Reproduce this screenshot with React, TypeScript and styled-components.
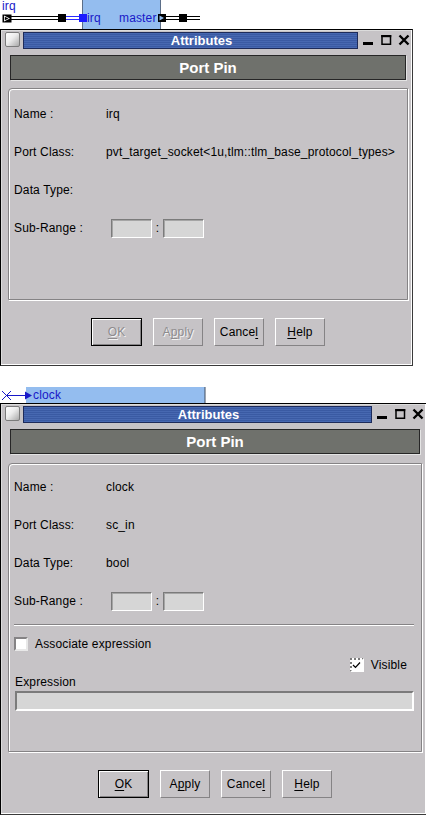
import React from 'react';
import styled, { createGlobalStyle, css } from 'styled-components';

const Global = createGlobalStyle`
  html, body { margin: 0; padding: 0; background: #ffffff; overflow: hidden; }
  body { font-family: "Liberation Sans", Arial, sans-serif; font-size: 12px; color: #000; letter-spacing: 0.15px; }
`;

const Page = styled.div`
  width: 426px;
  height: 815px;
  display: flex;
  flex-direction: column;
  overflow: hidden;
`;

const Strip = styled.svg<{ $h: number }>`
  display: block;
  flex: none;
  width: 426px;
  height: ${p => p.$h}px;
  font-family: "Liberation Sans", Arial, sans-serif;
  font-size: 12px;
`;

const Window = styled.div<{ $w: number; $h: number }>`
  flex: none;
  box-sizing: border-box;
  width: ${p => p.$w}px;
  height: ${p => p.$h}px;
  background: #c6c3c6;
  border: 1px solid #000;
  border-right-color: #3a3a3a;
  border-bottom-color: #3a3a3a;
  box-shadow: inset -1px -1px 0 #ffffff, inset 1px 1px 0 #dcdcdc;
  display: flex;
  flex-direction: column;
`;

const TitleRow = styled.div`
  flex: none;
  display: flex;
  height: 17px;
  margin: 2px 0 0 4px;
`;

const WinIcon = styled.div`
  flex: none;
  width: 15px;
  height: 15px;
  box-sizing: border-box;
  margin-right: 3px;
  border: 1px solid #7b7b7b;
  border-radius: 2px;
  background: linear-gradient(135deg, #ffffff 0%, #ececec 45%, #a9a9a9 100%);
`;

const TitleBar = styled.div`
  flex: 1;
  box-sizing: border-box;
  border: 1px solid #1d2b5a;
  background: repeating-linear-gradient(to bottom, #4768b1 0px, #4768b1 1px, #3a5aa3 1px, #3a5aa3 2px);
  color: #ffffff;
  font-weight: bold;
  font-size: 13px;
  letter-spacing: 0;
  line-height: 15px;
  text-align: center;
  padding-left: 22px;
  white-space: nowrap;
  overflow: hidden;
`;

const Controls = styled.svg`
  flex: none;
  display: block;
  width: 54px;
  height: 17px;
`;

const Header = styled.div`
  flex: none;
  box-sizing: border-box;
  height: 25px;
  margin: 6px 6px 0 9px;
  background: #6f716c;
  border: 1px solid #262626;
  box-shadow: 1px 1px 0 #e4e4e4;
  color: #ffffff;
  font-weight: bold;
  font-size: 15px;
  letter-spacing: 0;
  line-height: 23px;
  text-align: center;
`;

const Group = styled.div<{ $h: number; $pt: number; $gap: number }>`
  flex: none;
  box-sizing: border-box;
  height: ${p => p.$h}px;
  margin: ${p => p.$gap}px 4px 0 7px;
  padding: ${p => p.$pt}px 7px 0 5px;
  border: 1px solid #858385;
  border-top-left-radius: 4px;
  box-shadow: inset 1px 1px 0 #ffffff, 1px 1px 0 #ffffff;
  display: flex;
  flex-direction: column;
`;

const FieldGrid = styled.div`
  display: grid;
  grid-template-columns: 92px 1fr;
  grid-auto-rows: 20px;
  row-gap: 18px;
  align-items: center;
`;

const Text = styled.span`
  white-space: nowrap;
`;

const RangeBox = styled.div`
  display: flex;
  align-items: center;
  margin-left: 5px;
`;

const SmallInput = styled.div`
  width: 41px;
  height: 19px;
  box-sizing: border-box;
  background: #d6d6d6;
  border: 1px solid;
  border-color: #7b7b7b #ffffff #ffffff #7b7b7b;
  box-shadow: inset 1px 1px 0 #a5a5a5;
`;

const Colon = styled.span`
  width: 11px;
  text-align: center;
`;

const Separator = styled.div`
  height: 0;
  margin-top: 13px;
  border-top: 1px solid #858385;
  border-bottom: 1px solid #ffffff;
`;

const CheckRow = styled.div<{ $right?: boolean; $mt: number }>`
  display: flex;
  align-items: center;
  gap: 7px;
  height: 14px;
  margin-top: ${p => p.$mt}px;
  justify-content: ${p => (p.$right ? 'flex-end' : 'flex-start')};
  padding-right: ${p => (p.$right ? '7px' : '0')};
`;

const Check = styled.span<{ $checked?: boolean }>`
  flex: none;
  width: 14px;
  height: 14px;
  box-sizing: border-box;
  background: #ffffff;
  border: 2px solid;
  border-color: #858385 #e8e8e8 #e8e8e8 #858385;
  display: flex;
  align-items: center;
  justify-content: center;
  ${p =>
    p.$checked &&
    css`
      border-width: 2px;
      border-style: dotted;
      border-color: #7a7a7a #ffffff #ffffff #7a7a7a;
    `}
`;

const FieldLabel = styled.div`
  height: 14px;
  line-height: 14px;
  margin-top: 3px;
  padding-left: 1px;
`;

const WideInput = styled.div`
  height: 20px;
  margin: 2px 0 0 1px;
  box-sizing: border-box;
  background: #d6d6d6;
  border: 2px solid;
  border-color: #7b7b7b #ffffff #ffffff #7b7b7b;
`;

const ButtonRow = styled.div`
  flex: none;
  display: flex;
  justify-content: center;
  gap: 11px;
  margin-top: 18px;
  padding-left: 3px;
`;

const Btn = styled.div<{ $default?: boolean; $disabled?: boolean }>`
  width: ${p => (p.$default ? 51 : 50)}px;
  height: 28px;
  box-sizing: border-box;
  display: flex;
  align-items: center;
  justify-content: center;
  border: 1px solid;
  border-color: #ffffff #858385 #858385 #ffffff;
  color: ${p => (p.$disabled ? '#8e8c8e' : '#000')};
  text-shadow: ${p => (p.$disabled ? '1px 1px 0 #f4f4f4' : 'none')};
  ${p =>
    p.$default &&
    css`
      border-color: #000;
      box-shadow: inset 1px 1px 0 #ffffff, inset -1px -1px 0 #858385;
    `}
  u {
    text-decoration: underline;
    text-underline-offset: 2px;
  }
`;

const Gap = styled.div<{ $h: number }>`
  flex: none;
  height: ${p => p.$h}px;
`;

const BLUE = '#1818c8';

function ControlIcons() {
  return (
    <Controls viewBox="0 0 54 17">
      <rect x="5" y="10" width="10" height="3" fill="#000" />
      <rect x="24" y="3.75" width="8.5" height="8.5" fill="none" stroke="#000" strokeWidth="1.5" />
      <rect x="23.25" y="3" width="10" height="2.2" fill="#000" />
      <path d="M41.5 3.5 L50.5 12.5 M50.5 3.5 L41.5 12.5" stroke="#000" strokeWidth="2.4" />
    </Controls>
  );
}

function Dialog(props: {
  width: number;
  height: number;
  groupH: number;
  padTop: number;
  gap: number;
  name: string;
  portClass: string;
  dataType: string;
  disabled?: boolean;
  extra?: React.ReactNode;
}) {
  return (
    <Window $w={props.width} $h={props.height}>
      <TitleRow>
        <WinIcon />
        <TitleBar>Attributes</TitleBar>
        <ControlIcons />
      </TitleRow>
      <Header>Port Pin</Header>
      <Group $h={props.groupH} $pt={props.padTop} $gap={props.gap}>
        <FieldGrid>
          <Text>Name :</Text>
          <Text>{props.name}</Text>
          <Text>Port Class:</Text>
          <Text>{props.portClass}</Text>
          <Text>Data Type:</Text>
          <Text>{props.dataType}</Text>
          <Text>Sub-Range :</Text>
          <RangeBox>
            <SmallInput />
            <Colon>:</Colon>
            <SmallInput />
          </RangeBox>
        </FieldGrid>
        {props.extra}
      </Group>
      <ButtonRow>
        <Btn $default $disabled={props.disabled}>
          <span><u>O</u>K</span>
        </Btn>
        <Btn $disabled={props.disabled}>
          <span>A<u>p</u>ply</span>
        </Btn>
        <Btn>
          <span>Cance<u>l</u></span>
        </Btn>
        <Btn>
          <span><u>H</u>elp</span>
        </Btn>
      </ButtonRow>
    </Window>
  );
}

function ExpressionPart() {
  return (
    <>
      <Separator />
      <CheckRow $mt={11}>
        <Check />
        <Text>Associate expression</Text>
      </CheckRow>
      <CheckRow $right $mt={7}>
        <Check $checked>
          <svg width="9" height="8" viewBox="0 0 9 8">
            <path d="M1 4 L3.5 6.5 L8 1.5" fill="none" stroke="#000" strokeWidth="1.2" />
          </svg>
        </Check>
        <Text>Visible</Text>
      </CheckRow>
      <FieldLabel>Expression</FieldLabel>
      <WideInput />
    </>
  );
}

export default function App() {
  return (
    <Page>
      <Global />
      <Strip $h={29} viewBox="0 0 426 29">
        <text x="2" y="10" fill={BLUE}>irq</text>
        <rect x="2.5" y="14.5" width="9" height="8" fill="#000" />
        <polygon points="4,15.5 10,18.5 4,21.5" fill="#fff" />
        <polygon points="4.8,16.8 8.5,18.5 4.8,20.2" fill="#000" />
        <line x1="11" y1="16.5" x2="59" y2="16.5" stroke="#000" />
        <line x1="11" y1="19.5" x2="59" y2="19.5" stroke="#000" />
        <rect x="58" y="14" width="8" height="8" fill="#000" />
        <line x1="66" y1="16.5" x2="81" y2="16.5" stroke="#2a2aff" />
        <line x1="66" y1="19.5" x2="81" y2="19.5" stroke="#2a2aff" />
        <rect x="82.5" y="-1" width="78" height="31" fill="#94bdef" stroke="#5b6e88" />
        <rect x="79" y="14" width="8" height="8" fill="#1a1aff" />
        <text x="87" y="22" fill={BLUE}>irq</text>
        <text x="119" y="22" fill={BLUE}>master</text>
        <rect x="158" y="14" width="8" height="8" fill="#000" />
        <polygon points="159.5,15.5 164,18 159.5,20.5" fill="#94bdef" />
        <line x1="166" y1="16.5" x2="180" y2="16.5" stroke="#000" />
        <line x1="166" y1="19.5" x2="180" y2="19.5" stroke="#000" />
        <rect x="179" y="14" width="8" height="8" fill="#000" />
        <line x1="187" y1="16.5" x2="200" y2="16.5" stroke="#000" />
        <line x1="187" y1="19.5" x2="200" y2="19.5" stroke="#000" />
      </Strip>
      <Dialog
        width={413}
        height={337}
        groupH={212}
        padTop={15}
        gap={8}
        name="irq"
        portClass="pvt_target_socket<1u,tlm::tlm_base_protocol_types>"
        dataType=""
        disabled
      />
      <Strip $h={37} viewBox="0 0 426 37">
        <rect x="26" y="21" width="179" height="17" fill="#94bdef" />
        <line x1="205" y1="21" x2="205" y2="37" stroke="#3e4a5c" />
        <path d="M2 25 L11 34 M11 25 L2 34" stroke={BLUE} strokeWidth="1" />
        <line x1="7" y1="29.5" x2="27" y2="29.5" stroke={BLUE} />
        <polygon points="25,25.5 32,29.5 25,33.5" fill={BLUE} />
        <text x="33" y="33" fill={BLUE}>clock</text>
      </Strip>
      <Dialog
        width={427}
        height={412}
        groupH={289}
        padTop={13}
        gap={9}
        name="clock"
        portClass="sc_in"
        dataType="bool"
        extra={<ExpressionPart />}
      />
      <Gap $h={4} />
    </Page>
  );
}
